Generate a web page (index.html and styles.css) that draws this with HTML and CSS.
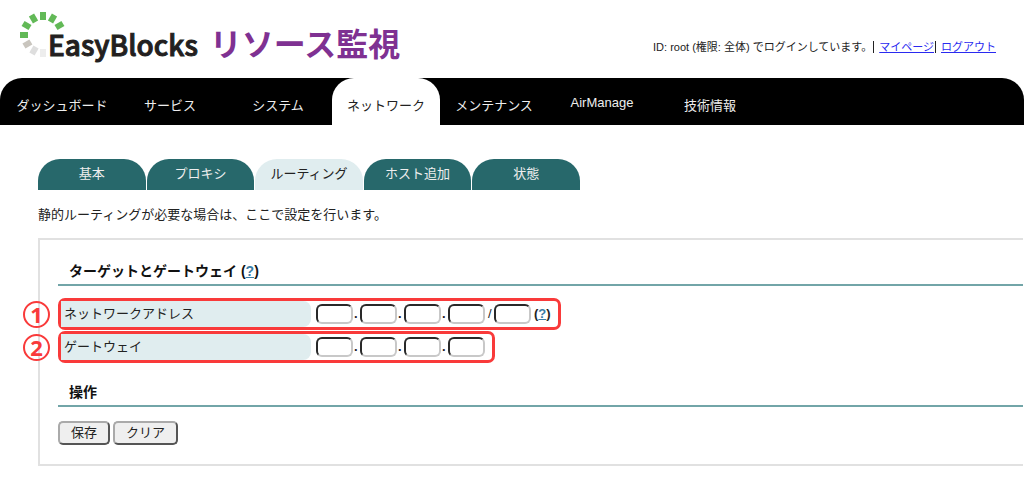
FILE: index.html
```html
<!DOCTYPE html>
<html lang="ja">
<head>
  <meta charset="UTF-8" />
  <title>EasyBlocks リソース監視</title>
  <link rel="stylesheet" href="styles.css">
</head>
<body>

<header class="header">
  <div class="logo">
    <svg class="logo-mark" width="46" height="50" viewBox="0 0 46 50" aria-hidden="true">
      <g fill="#62b957">
        <rect x="20" y="3" width="6" height="8"/>
        <rect x="20" y="3" width="6" height="8" transform="rotate(30 23 26)"/>
        <rect x="20" y="3" width="6" height="8" transform="rotate(60 23 26)"/>
        <rect x="20" y="3" width="6" height="8" transform="rotate(-30 23 26)"/>
        <rect x="20" y="3" width="6" height="8" transform="rotate(-60 23 26)"/>
        <rect x="20" y="3" width="6" height="8" transform="rotate(-90 23 26)"/>
      </g>
      <rect x="20" y="4" width="6" height="8" transform="rotate(-120 23 26)" fill="#c9c5be"/>
      <rect x="20" y="4" width="6" height="8" transform="rotate(-150 23 26)" fill="#dedede"/>
      <rect x="20" y="4" width="6" height="8" transform="rotate(180 23 26)" fill="#ededed"/>
    </svg>
    <span class="logo-name">EasyBlocks</span>
    <span class="logo-product">リソース監視</span>
  </div>
  <div class="login">
    <span>ID: root (権限: 全体) でログインしています。</span>
    <span class="bar"></span>
    <a href="#">マイページ</a>
    <span class="bar"></span>
    <a href="#">ログアウト</a>
  </div>
</header>

<nav class="main-nav">
  <a href="#">ダッシュボード</a>
  <a href="#">サービス</a>
  <a href="#">システム</a>
  <a href="#" class="active">ネットワーク</a>
  <a href="#">メンテナンス</a>
  <a href="#" class="latin">AirManage</a>
  <a href="#">技術情報</a>
</nav>

<main class="content">
  <nav class="sub-nav">
    <a href="#">基本</a>
    <a href="#">プロキシ</a>
    <a href="#" class="active">ルーティング</a>
    <a href="#">ホスト追加</a>
    <a href="#">状態</a>
  </nav>

  <p class="lead">静的ルーティングが必要な場合は、ここで設定を行います。</p>

  <form class="panel">
    <h2>ターゲットとゲートウェイ (<a href="#">?</a>)</h2>

    <div class="rows">
      <div class="row">
        <span class="mark">1</span>
        <label for="net1">ネットワークアドレス</label>
        <div class="fields">
          <input type="text" id="net1"><i>.</i>
          <input type="text" aria-label="ネットワークアドレス 2"><i>.</i>
          <input type="text" aria-label="ネットワークアドレス 3"><i>.</i>
          <input type="text" aria-label="ネットワークアドレス 4"><i class="slash">/</i>
          <input type="text" aria-label="プレフィックス長">
          <b class="help">(<a href="#">?</a>)</b>
        </div>
      </div>
      <div class="row">
        <span class="mark">2</span>
        <label for="gw1">ゲートウェイ</label>
        <div class="fields">
          <input type="text" id="gw1"><i>.</i>
          <input type="text" aria-label="ゲートウェイ 2"><i>.</i>
          <input type="text" aria-label="ゲートウェイ 3"><i>.</i>
          <input type="text" aria-label="ゲートウェイ 4">
        </div>
      </div>
    </div>

    <h2>操作</h2>
    <div class="buttons">
      <button type="button">保存</button>
      <button type="reset">クリア</button>
    </div>
  </form>
</main>

</body>
</html>
```
FILE: styles.css
```css
* { box-sizing: border-box; }
body {
  margin: 0;
  background: #fff;
  color: #222;
  font: 13px/20px "Liberation Sans", "Noto Sans CJK JP", sans-serif;
}

/* header */
.header {
  display: flex;
  justify-content: space-between;
  align-items: center;
  height: 78px;
  padding: 0 28px 0 20px;
}
.logo {
  display: flex;
  align-items: center;
  font-family: "Noto Sans CJK JP", sans-serif;
  line-height: 48px;
  white-space: nowrap;
}
.logo-mark { margin-right: -18px; margin-bottom: 10px; }
.logo-name {
  padding-top: 10px;
  color: #231f20;
  font-size: 28px;
  font-weight: 500;
  -webkit-text-stroke: 1px #231f20;
}
.logo-product {
  margin-left: 12px;
  padding-top: 6px;
  color: #7f3192;
  font-size: 32px;
  font-weight: 700;
}
.login {
  display: flex;
  align-items: center;
  padding-top: 16px;
  font-size: 11px;
  white-space: nowrap;
}
.login a { color: #2a2af0; }
.bar {
  width: 1px;
  height: 12px;
  margin: 0 5px 0 1px;
  background: #222;
}

/* main menu */
.main-nav {
  display: flex;
  height: 47px;
  padding-left: 8px;
  background: #000;
  border-radius: 22px 22px 0 0;
}
.main-nav a {
  width: 108px;
  padding-top: 18px;
  border-radius: 22px 22px 0 0;
  color: #eee;
  text-align: center;
  text-decoration: none;
  white-space: nowrap;
}
.main-nav a.latin { padding-top: 15px; }
.main-nav a.active { background: #fff; color: #222; }

/* page */
.content { padding: 34px 1px 14px 38px; }
.sub-nav {
  display: grid;
  grid-template-columns: repeat(5, 1fr);
  gap: 1px;
  max-width: 542px;
}
.sub-nav a {
  height: 31px;
  padding-top: 5px;
  border-radius: 22px 22px 0 0;
  background: #27686b;
  color: #eee;
  text-align: center;
  text-decoration: none;
}
.sub-nav a.active { background: #e0edef; color: #222; }
.lead { margin: 15px 0 13px; }

.panel {
  padding: 20px 0 19px 18px;
  border: 2px solid #e1e1e1;
  border-right: 0;
}
.panel h2 {
  margin: 0;
  padding: 0 11px 2px;
  border-bottom: 2px solid #72a5a8;
  color: #111;
  font-size: 14px;
  line-height: 22px;
}
.panel h2 a,
.help a { color: #3a7ca5; }

/* setting rows */
.rows {
  display: flex;
  flex-direction: column;
  align-items: flex-start;
  gap: 1px;
  padding: 12px 0 18px;
}
.row {
  position: relative;
  display: flex;
  padding-right: 7px;
  border: 3px solid #f93a3a;
  border-radius: 7px;
}
.row label {
  width: 250px;
  padding: 3px;
  border-radius: 0 8px 8px 0;
  background: #e0edef;
}
.mark {
  position: absolute;
  top: 0;
  left: -38px;
  width: 27px;
  height: 27px;
  border: 2px solid #f93a3a;
  border-radius: 50%;
  color: #f93a3a;
  font: bold 22px/23px "Open Sans", sans-serif;
  text-align: center;
}
.fields {
  display: flex;
  align-items: center;
  padding-left: 5px;
}
.fields input {
  width: 37px;
  height: 20px;
  padding: 0 3px;
  border: 2px solid;
  border-color: #292929 #c8c8c8 #c8c8c8 #292929;
  border-radius: 6px;
  background: #fff;
  font: inherit;
}
.fields i {
  width: 7px;
  padding-left: 1px;
  font-style: normal;
  font-weight: bold;
}
.fields .slash {
  width: 9px;
  padding-left: 3px;
  font-weight: normal;
}
.help { margin-left: 3px; }

.buttons {
  display: flex;
  gap: 3px;
  padding-top: 14px;
}
.buttons button {
  height: 24px;
  padding: 0 11px;
  border: 2px solid;
  border-color: #aaa #555 #555 #aaa;
  border-radius: 5px;
  background: #efefef;
  color: #222;
  font: inherit;
}
```
